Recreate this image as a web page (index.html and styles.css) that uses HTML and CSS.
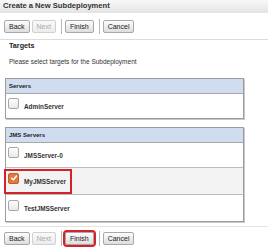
FILE: index.html
```html
<!DOCTYPE html>
<html lang="en">
<head>
  <meta charset="UTF-8">
  <title>Create a New Subdeployment</title>
  <link rel="stylesheet" href="styles.css">
</head>
<body>
  <div class="title">Create a New Subdeployment</div>

  <!-- top buttons -->
  <div class="toolbar">
    <button class="btn">Back</button>
    <button class="btn" disabled>Next</button>
    <span class="sep"></span>
    <button class="btn">Finish</button>
    <span class="sep"></span>
    <button class="btn">Cancel</button>
  </div>

  <div class="content">
    <div class="heading">Targets</div>
    <p class="intro">Please select targets for the Subdeployment</p>

    <div class="group">
      <div class="group-head">Servers</div>
      <div class="row">
        <label class="item"><span class="check"></span>AdminServer</label>
      </div>
    </div>

    <div class="group">
      <div class="group-head">JMS Servers</div>
      <div class="row">
        <label class="item"><span class="check"></span>JMSServer-0</label>
      </div>
      <div class="row selected">
        <label class="item marked"><span class="check on"><svg viewBox="0 0 10 10" width="8" height="8"><path d="M2 5.2 L4.2 7.3 L8.2 2.6" fill="none" stroke="#fff" stroke-width="1.8" stroke-linecap="round" stroke-linejoin="round"/></svg></span>MyJMSServer</label>
      </div>
      <div class="row">
        <label class="item"><span class="check"></span>TestJMSServer</label>
      </div>
    </div>
  </div>

  <!-- bottom buttons -->
  <div class="toolbar bottom">
    <button class="btn">Back</button>
    <button class="btn" disabled>Next</button>
    <span class="sep"></span>
    <button class="btn marked">Finish</button>
    <span class="sep"></span>
    <button class="btn">Cancel</button>
  </div>
</body>
</html>
```

FILE: styles.css
```css
body {
  margin: 0;
  width: 268px;
  font-family: 'Liberation Sans', Arial, sans-serif;
  color: #222;
  background: #fff;
}

.title {
  height: 13px;
  line-height: 11px;
  padding-left: 3px;
  font-size: 7.6px;
  font-weight: bold;
  color: #333;
  background: linear-gradient(#f8f8f8, #e4e4e4);
}

.toolbar {
  display: flex;
  align-items: center;
  gap: 2px;
  padding: 6px 4px 5px;
  border-bottom: 1px solid #dcdcdc;
}

.toolbar.bottom {
  border-bottom: none;
  border-top: 1px solid #e4e4e4;
  padding-top: 4px;
  margin-top: 4px;
}

.btn {
  height: 13px;
  padding: 0 4px;
  font-family: inherit;
  font-size: 7px;
  color: #222;
  background: linear-gradient(#fdfdfd, #dedede);
  border: 1px solid #a8a8a8;
  border-radius: 2px;
  line-height: 11px;
}

.btn:disabled {
  color: #aaa;
  border-color: #d0d0d0;
  background: linear-gradient(#fafafa, #ececec);
}

.sep {
  width: 1px;
  height: 15px;
  margin: 0 1px 0 3px;
  background: #b8b8b8;
}

.marked {
  outline: 2px solid #d2232a;
}

.content {
  padding: 0 5px;
}

.heading {
  margin-top: 1px;
  padding-left: 4px;
  line-height: 10px;
  font-size: 7.2px;
  font-weight: bold;
}

.intro {
  margin: 6px 0 11px;
  padding-left: 4px;
  line-height: 10px;
  font-size: 6.5px;
  color: #333;
}

.group {
  width: 237px;
  margin-bottom: 8px;
  border: 1px solid #9c9c9c;
  box-shadow: 1px 1px 0 #c8c8c8;
}

.group:last-child {
  margin-bottom: 0;
}

.group-head {
  height: 14px;
  line-height: 14px;
  padding-left: 3px;
  font-size: 6px;
  font-weight: bold;
  background: #d0dcef;
  border-bottom: 1px solid #a8a8a8;
}

.row {
  height: 26px;
  display: flex;
  align-items: center;
  border-top: 1px solid #bdbdbd;
}

.group-head + .row {
  height: 24px;
  border-top: none;
}

.row.selected {
  background: #f3f3f3;
}

.item {
  display: flex;
  align-items: center;
  gap: 5px;
  padding: 0 4px 0 2px;
  height: 21px;
  font-size: 6.4px;
  font-weight: bold;
  color: #333;
}

.check {
  width: 9px;
  height: 9px;
  border: 1px solid #a8a8a8;
  border-radius: 2px;
  background: linear-gradient(#fff, #e8e8e8);
  display: flex;
  align-items: center;
  justify-content: center;
  margin-top: -6px;
}

.check.on {
  background: #e07b3c;
  border-color: #c0602a;
}
```
